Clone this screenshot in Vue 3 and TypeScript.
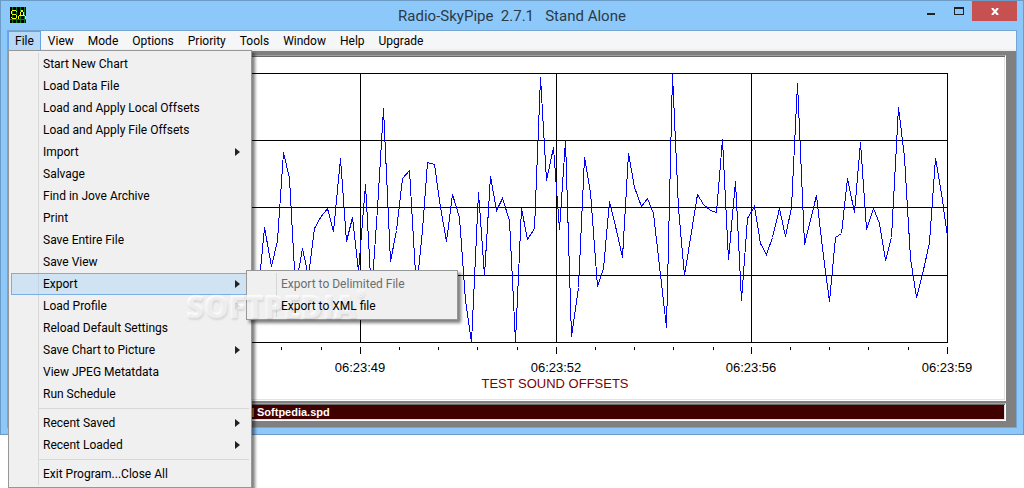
<script setup lang="ts">
interface MenuEntry {
  label: string
  submenu?: boolean
  active?: boolean
  separated?: boolean
}

const menuBar: string[] = ['File', 'View', 'Mode', 'Options', 'Priority', 'Tools', 'Window', 'Help', 'Upgrade']

const fileMenu: MenuEntry[] = [
  { label: 'Start New Chart' },
  { label: 'Load Data File' },
  { label: 'Load and Apply Local Offsets' },
  { label: 'Load and Apply File Offsets' },
  { label: 'Import', submenu: true },
  { label: 'Salvage' },
  { label: 'Find in Jove Archive' },
  { label: 'Print' },
  { label: 'Save Entire File' },
  { label: 'Save View' },
  { label: 'Export', submenu: true, active: true },
  { label: 'Load Profile', submenu: true },
  { label: 'Reload Default Settings' },
  { label: 'Save Chart to Picture', submenu: true },
  { label: 'View JPEG Metatdata' },
  { label: 'Run Schedule' },
  { label: 'Recent Saved', submenu: true, separated: true },
  { label: 'Recent Loaded', submenu: true },
  { label: 'Exit Program...Close All', separated: true },
]

const samples: [number, number][] = [
  [252, 300], [258, 290], [264, 227], [271, 266], [277, 240], [283, 152], [289, 178], [295, 288],
  [302, 248], [308, 276], [314, 228], [320, 217], [327, 208], [333, 231], [340, 158], [346, 241],
  [352, 217], [358, 271], [365, 184], [371, 295], [377, 208], [383, 108], [390, 261], [396, 230],
  [402, 178], [409, 170], [416, 290], [422, 230], [427, 162], [434, 164], [440, 207], [446, 241],
  [452, 194], [459, 217], [465, 300], [471, 342], [478, 192], [484, 275], [490, 176], [496, 210],
  [502, 198], [509, 220], [515, 341], [521, 208], [527, 239], [534, 228], [540, 77], [546, 180],
  [553, 147], [559, 229], [565, 140], [571, 336], [578, 287], [584, 157], [590, 192], [597, 286],
  [603, 268], [609, 201], [616, 230], [622, 257], [628, 153], [634, 187], [641, 206], [647, 198],
  [653, 213], [666, 327], [672, 74], [678, 208], [684, 275], [697, 194], [703, 204], [710, 210],
  [716, 212], [722, 139], [728, 259], [735, 181], [741, 300], [747, 218], [754, 206], [760, 243],
  [766, 254], [772, 237], [779, 208], [785, 236], [791, 207], [797, 83], [804, 244], [816, 195],
  [822, 248], [829, 301], [835, 237], [841, 233], [847, 178], [854, 212], [860, 142], [866, 229],
  [873, 208], [879, 223], [885, 260], [891, 237], [898, 107], [904, 157], [910, 258], [916, 297],
  [922, 274], [929, 242], [935, 158], [941, 193], [947, 236],
]
const trace = samples.map(([x, y]) => `${x},${y}`).join(' ')

const levels = [73, 140, 207, 275, 342]
const times = [
  { x: 360, label: '06:23:49' },
  { x: 556, label: '06:23:52' },
  { x: 751, label: '06:23:56' },
  { x: 947, label: '06:23:59' },
]
const ticks = [281, 321, 399, 438, 477, 517, 595, 634, 673, 713, 790, 829, 868, 908]
</script>

<template>
  <div class="desktop">
    <main class="window">
      <header class="titlebar">
        <svg class="app-icon" viewBox="0 0 16 16" aria-hidden="true">
          <rect width="16" height="16" fill="#000" />
          <path d="M2.500 0V16M6.500 0V16M10.500 0V16M14.500 0V16M0 12.500H16" stroke="#087a20" shape-rendering="crispEdges" />
          <path d="M2 3H6V4H2ZM1 4H2V7H1ZM6 4H7V5H6ZM2 7H6V8H2ZM6 8H7V11H6ZM1 10H2V11H1ZM2 11H6V12H2ZM11 3H13V5H11ZM10 5H11V8H10ZM13 5H14V8H13ZM9 8H15V9H9ZM8 9H9V12H8ZM15 9H16V12H15Z" fill="#ff0" shape-rendering="crispEdges" />
        </svg>
        <h1 class="title">Radio-SkyPipe&nbsp; 2.7.1&nbsp;&nbsp; Stand Alone</h1>
        <div class="controls">
          <button class="control" type="button" aria-label="Minimize">
            <svg width="11" height="10" viewBox="0 0 11 10"><path d="M2 7H10V9H2Z" fill="#222" shape-rendering="crispEdges" /></svg>
          </button>
          <button class="control" type="button" aria-label="Maximize">
            <svg width="10" height="8" viewBox="0 0 10 8"><path d="M0 0H10V8H0ZM1 2V7H9V2Z" fill="#222" fill-rule="evenodd" shape-rendering="crispEdges" /></svg>
          </button>
          <button class="control close" type="button" aria-label="Close">
            <svg width="8" height="7" viewBox="0 0 8 7"><path d="M1 0L7 7M7 0L1 7" stroke="#fff" stroke-width="2" /></svg>
          </button>
        </div>
      </header>

      <div class="client">
        <nav class="menubar">
          <button v-for="(name, i) in menuBar" :key="name" type="button" class="menubar-item" :class="{ open: i === 0 }">{{ name }}</button>
        </nav>

        <section class="workspace">
          <div class="panel">
            <svg class="chart" viewBox="12 57 992 342" role="img" aria-label="Test sound offsets">
              <g stroke="#000" shape-rendering="crispEdges">
                <line v-for="y in levels" :key="y" x1="60" x2="948" :y1="y + 0.5" :y2="y + 0.5" />
                <line v-for="t in times" :key="t.x" :x1="t.x + 0.5" :x2="t.x + 0.5" y1="73" y2="342" />
                <line v-for="t in times" :key="t.label" :x1="t.x + 0.5" :x2="t.x + 0.5" y1="347" y2="354" />
                <line v-for="x in ticks" :key="x" :x1="x + 0.5" :x2="x + 0.5" y1="347" y2="350" />
              </g>
              <polyline class="trace" :points="trace" transform="translate(0.5 0.5)" />
              <text v-for="t in times" :key="t.label" class="time" :x="t.x" y="372">{{ t.label }}</text>
              <text class="caption" x="555" y="388">TEST SOUND OFFSETS</text>
            </svg>
          </div>
          <div class="panel status"><i class="marker"></i>Softpedia.spd</div>
        </section>
      </div>
    </main>

    <div class="popup file-menu" role="menu">
      <template v-for="item in fileMenu" :key="item.label">
        <hr v-if="item.separated" class="separator" />
        <button type="button" role="menuitem" class="entry" :class="{ active: item.active }">
          {{ item.label }}
          <svg v-if="item.submenu" class="arrow" viewBox="0 0 5 8" aria-hidden="true"><path d="M0 0L5 4L0 8Z" fill="#222" /></svg>
        </button>
      </template>
    </div>

    <div class="popup export-menu" role="menu">
      <button type="button" role="menuitem" class="entry" disabled>Export to Delimited File</button>
      <button type="button" role="menuitem" class="entry">Export to XML file</button>
    </div>

    <div class="watermark" aria-hidden="true">SOFTPEDIA<sup>®</sup></div>
  </div>
</template>

<style>
body {
  margin: 0;
  background: #fff;
}
</style>

<style scoped>
.desktop {
  position: relative;
  min-height: 100vh;
  font-family: Roboto, "Open Sans", sans-serif;
  font-size: 12px;
  color: #000;
}
.desktop * {
  box-sizing: border-box;
}
button {
  font: inherit;
  color: inherit;
  border: 0;
  padding: 0;
  margin: 0;
  background: none;
}
.window {
  border: 1px solid #6c9cc6;
  background: #8dc8fa;
  padding: 0 6px 6px;
}
.titlebar {
  height: 29px;
  display: grid;
  grid-template-columns: 1fr auto 1fr;
}
.app-icon {
  width: 16px;
  height: 16px;
  margin: 6px 3px;
}
.title {
  margin: 0;
  font-size: 15px;
  line-height: 30px;
  font-weight: 400;
  color: #2b3a47;
}
.controls {
  display: flex;
  justify-content: flex-end;
  height: 20px;
}
.control {
  width: 27px;
  display: flex;
  align-items: center;
  justify-content: center;
}
.control + .control {
  margin-left: 1px;
}
.control + .control.close {
  width: 45px;
  margin-left: 0;
  background: #c75050;
}
.client {
  border: 1px solid #76a5cf;
}
.menubar {
  height: 20px;
  display: flex;
  background: #f5f6f7;
  border-bottom: 2px solid #efefef;
}
.menubar-item {
  height: 20px;
  padding: 0 7px;
  line-height: 20px;
}
.menubar-item.open {
  background: #b8d8f8;
  box-shadow: inset 0 0 0 1px #64a3e4;
}
.workspace {
  background: #808080;
  padding: 4px 10px 6px 2px;
  display: flex;
  flex-direction: column;
  gap: 2px;
}
.panel {
  background: #fff;
  border: 1px solid;
  border-color: #a0a0a0 #fff #fff #a0a0a0;
  box-shadow: inset 1px 1px #696969, inset -1px -1px #e3e3e3;
  padding: 1px;
}
.chart {
  display: block;
  width: 100%;
  height: auto;
}
.trace {
  fill: none;
  stroke: #00f;
  stroke-width: 1;
  shape-rendering: crispEdges;
}
.time,
.caption {
  font-family: "Liberation Sans", Arial, sans-serif;
  font-size: 13px;
  text-anchor: middle;
}
.caption {
  fill: #800000;
}
.status {
  display: flex;
  align-items: center;
  height: 18px;
  padding: 0 1px 0 241px;
  gap: 3px;
  background: #400000;
  color: #fff;
  font-family: "Liberation Sans", Arial, sans-serif;
  font-size: 11px;
  font-weight: 700;
}
.marker {
  width: 2px;
  height: 9px;
  background: #c77a28;
}
.popup {
  position: absolute;
  border: 1px solid #979797;
  background: linear-gradient(#d7d7d7, #d7d7d7) 29px 2px / 1px calc(100% - 4px) no-repeat #f0f0f0;
  padding: 2px;
  box-shadow: 3px 3px 3px rgba(0, 0, 0, 0.5);
}
.file-menu {
  top: 50px;
  left: 8px;
  width: 244px;
}
.export-menu {
  top: 270px;
  left: 246px;
  width: 212px;
}
.entry {
  display: flex;
  align-items: center;
  justify-content: space-between;
  width: 100%;
  height: 22px;
  padding: 0 9px 0 32px;
  line-height: 22px;
  white-space: nowrap;
}
.export-menu .entry {
  position: relative;
  z-index: 2;
}
.entry.active {
  background: rgba(174, 213, 244, 0.5);
  box-shadow: inset 0 0 0 1px #78aee5;
}
.entry:disabled {
  color: #6d6d6d;
}
.arrow {
  width: 5px;
  height: 8px;
}
.separator {
  height: 1px;
  margin: 3px 0 3px 28px;
  border: 0;
  background: #d7d7d7;
}
.watermark {
  position: absolute;
  z-index: 1;
  top: 288px;
  left: 186px;
  pointer-events: none;
  font-family: "Open Sans", sans-serif;
  font-size: 31px;
  font-weight: 800;
  line-height: 36px;
  color: rgba(255, 255, 255, 0.4);
  text-shadow: 1px 2px 2px rgba(0, 0, 0, 0.1), 0 0 1px rgba(255, 255, 255, 0.8);
}
.watermark sup {
  font-size: 10px;
  line-height: 10px;
  vertical-align: top;
}
</style>
